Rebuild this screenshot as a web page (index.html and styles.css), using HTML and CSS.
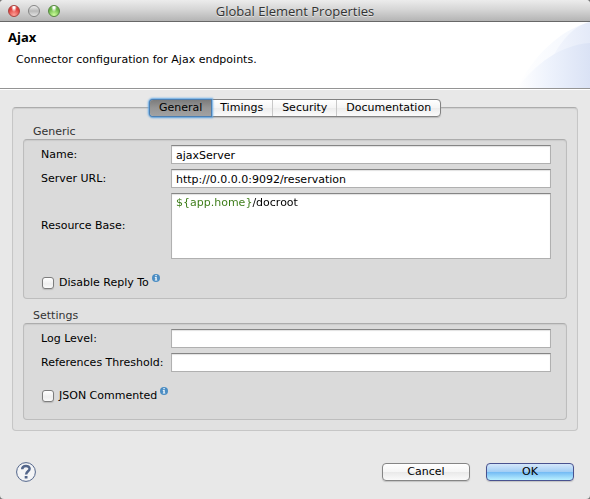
FILE: index.html
```html
<!DOCTYPE html>
<html lang="en">
<head>
<meta charset="utf-8">
<title>Global Element Properties</title>
<link rel="stylesheet" href="styles.css">
</head>
<body>
<main class="window">
  <header class="titlebar">
    <div class="lights">
      <button class="light red" type="button" aria-label="Close"></button>
      <button class="light gray" type="button" aria-label="Minimize"></button>
      <button class="light green" type="button" aria-label="Zoom"></button>
    </div>
    <h1 class="title">Global Element Properties</h1>
  </header>
  <section class="banner">
    <div class="banner-text">
      <h2 class="banner-title">Ajax</h2>
      <p class="banner-desc">Connector configuration for Ajax endpoints.</p>
    </div>
    <svg class="banner-art" viewBox="0 0 75 66" aria-hidden="true">
      <defs>
        <linearGradient id="far" x1="0" x2="1"><stop offset="0" stop-color="#fff"/><stop offset="1" stop-color="#f1f5fd"/></linearGradient>
        <linearGradient id="mid" x1="0" x2="1"><stop offset="0" stop-color="#f3f6fd"/><stop offset="1" stop-color="#e4eaf8"/></linearGradient>
        <linearGradient id="near" x1="0" x2="1"><stop offset="0" stop-color="#fff"/><stop offset=".45" stop-color="#edf2fc"/><stop offset="1" stop-color="#dae2f5"/></linearGradient>
      </defs>
      <path fill="url(#far)" d="M2 66C18 35 44 8 75 0V66Z"/>
      <path fill="url(#mid)" d="M37 36C47 18 58 4 75 0V66H37Z"/>
      <path fill="url(#near)" d="M2 66C20 43 44 23 75 21V66Z"/>
    </svg>
  </section>
  <form class="content">
    <section class="panel">
      <div class="tabs" role="tablist">
        <button class="tab active" type="button" role="tab" aria-selected="true">General</button>
        <button class="tab" type="button" role="tab" aria-selected="false">Timings</button>
        <button class="tab" type="button" role="tab" aria-selected="false">Security</button>
        <button class="tab" type="button" role="tab" aria-selected="false">Documentation</button>
      </div>
      <h3 class="group-title">Generic</h3>
      <div class="group">
        <label for="name">Name:</label>
        <input class="field" id="name" type="text" value="ajaxServer">
        <label for="url">Server URL:</label>
        <input class="field" id="url" type="text" value="http://0.0.0.0:9092/reservation">
        <label for="base">Resource Base:</label>
        <textarea class="field area" id="base" spellcheck="false">${app.home}/docroot</textarea>
        <div class="check">
          <input class="box" id="reply" type="checkbox">
          <label for="reply">Disable Reply To</label>
          <svg class="info" viewBox="0 0 8 8" aria-hidden="true"><circle cx="4" cy="4" r="4" fill="#4b8dc3"/><path fill="#fff" d="M3.4 1h1.3v1.2H3.4zM2.8 3h1.9v2.8h.6v.8H2.8v-.8h.6v-2h-.6z"/></svg>
        </div>
      </div>
      <h3 class="group-title">Settings</h3>
      <div class="group settings">
        <label for="log">Log Level:</label>
        <input class="field" id="log" type="text">
        <label for="refs">References Threshold:</label>
        <input class="field" id="refs" type="text">
        <div class="check">
          <input class="box" id="json" type="checkbox">
          <label for="json">JSON Commented</label>
          <svg class="info" viewBox="0 0 8 8" aria-hidden="true"><circle cx="4" cy="4" r="4" fill="#4b8dc3"/><path fill="#fff" d="M3.4 1h1.3v1.2H3.4zM2.8 3h1.9v2.8h.6v.8H2.8v-.8h.6v-2h-.6z"/></svg>
        </div>
      </div>
    </section>
    <footer class="footer">
      <button class="help" type="button" aria-label="Help">
        <svg class="help-icon" viewBox="0 0 20 20" aria-hidden="true"><circle cx="10" cy="10" r="9.4" fill="#f3f4f6" stroke="#52658a" stroke-width="1"/><path d="M6.2 7.2C6.3 2.8 13.6 3 13.6 6.8C13.6 9.2 10.1 9.4 10.1 12.5" fill="none" stroke="#52658a" stroke-width="2.5"/><path d="M8.7 14.1h2.8v2.5H8.7z" fill="#52658a"/></svg>
      </button>
      <button class="push" type="button">Cancel</button>
      <button class="push primary" type="submit">OK</button>
    </footer>
  </form>
</main>
</body>
</html>
```
FILE: styles.css
```css
* {
  box-sizing: border-box;
}

body {
  margin: 0;
  background: #777;
  color: #000;
  font: 11px/18px "DejaVu Sans", sans-serif;
}

button,
input,
textarea {
  font: inherit;
  color: inherit;
}

h1, h2, h3, p {
  margin: 0;
}

.window {
  display: flex;
  flex-direction: column;
  min-height: 100vh;
  overflow: hidden;
  border-radius: 4px;
  background: #e8e8e8;
}

.titlebar {
  display: grid;
  grid-template-columns: 1fr auto 1fr;
  align-items: center;
  height: 22px;
  padding: 0 8px;
  border-bottom: 1px solid #686868;
  background: linear-gradient(#ececec, #d6d6d6 45%, #b4b4b4);
}

.lights {
  display: flex;
  gap: 8px;
}

.light {
  width: 12px;
  height: 12px;
  padding: 0;
  border: 1px solid #777;
  border-radius: 50%;
}

.red {
  border-color: #a84440;
  background: radial-gradient(ellipse at 50% 10%, #fff 0 12%, transparent 40%), radial-gradient(circle at 50% 90%, #ffa39a, #dd3c39 65%);
}

.gray {
  border-color: #858585;
  background: linear-gradient(#eee, #b9b9b9 50%, #e4e4e4);
}

.green {
  border-color: #568740;
  background: radial-gradient(ellipse at 50% 10%, #fff 0 12%, transparent 40%), radial-gradient(circle at 50% 90%, #ceff9c, #68b446 65%);
}

.title {
  font-family: "Open Sans", sans-serif;
  font-size: 13px;
  font-weight: 400;
  color: #333;
  text-shadow: 0 1px 0 #e6e6e6;
}

.banner {
  display: flex;
  justify-content: space-between;
  height: 68px;
  border-bottom: 1px solid #fff;
  background: #fff;
  box-shadow: inset 0 -1px 0 #949494;
}

.banner-text {
  padding: 6px 8px;
}

.banner-title {
  font-family: "Open Sans", sans-serif;
  font-size: 13px;
  font-weight: 700;
}

.banner-desc {
  padding: 5px 8px;
}

.banner-art {
  width: 75px;
  height: 66px;
}

.content {
  display: flex;
  flex: 1;
  flex-direction: column;
  padding: 17px 12px;
}

.panel {
  padding: 0 10px 10px;
  border: 1px solid #c6c6c6;
  border-top-color: #acacac;
  border-radius: 4px;
  background: #e1e1e1;
  box-shadow: inset 0 1px 1px #cfcfcf;
}

.tabs {
  display: flex;
  width: max-content;
  height: 18px;
  margin: -9px auto 0;
  border: 1px solid #828282;
  border-radius: 4px;
  background: linear-gradient(#fff, #f4f4f4 50%, #ececec 51%, #fbfbfb);
  box-shadow: 0 1px 1px #bbb;
}

.tab {
  padding: 0 9px;
  border: 0;
  background: none;
  line-height: 16px;
}

.tab + .tab + .tab {
  border-left: 1px solid #c8c8c8;
}

.active {
  border-radius: 3px 0 0 3px;
  background: linear-gradient(#7c7c7c, #969696 50%, #a2a2a2);
  box-shadow: 0 0 0 1px #4c7fb2, 0 0 2px 2px #62a8e6;
}

.group-title {
  padding: 8px 10px 0;
  font-size: 11px;
  font-weight: 400;
  line-height: 14px;
  color: #333;
}

.group {
  display: grid;
  grid-template-columns: 130px 1fr;
  gap: 5px 0;
  align-items: center;
  padding: 5px 15px 5px 17px;
  border: 1px solid #bdbdbd;
  border-top-color: #acacac;
  border-radius: 4px;
  background: #dadada;
  box-shadow: inset 0 1px 1px #cacaca;
}

.group + .group-title {
  padding-top: 10px;
}

.settings {
  padding-bottom: 13px;
}

.field {
  width: 100%;
  height: 19px;
  padding: 1px 4px 0;
  border: 1px solid #b0b0b0;
  border-top-color: #858585;
  border-radius: 0;
  background: #fff;
  box-shadow: inset 0 1px 1px #e2e2e2;
  outline: 0;
}

/* The variable part of the first line is tinted through the glyphs. */
.area {
  display: block;
  height: 66px;
  resize: none;
  line-height: 16px;
  color: transparent;
  caret-color: #000;
  background:
    linear-gradient(to right, #397a14 80px, #000 80px) text,
    #fff;
}

.check {
  display: flex;
  grid-column: 1 / -1;
  align-items: center;
  height: 20px;
  margin-top: 9px;
}

.box {
  width: 12px;
  height: 12px;
  margin: 0 5px 0 1px;
  appearance: none;
  border: 1px solid #7d7d7d;
  border-radius: 3px;
  background: linear-gradient(#fff, #eee 60%, #fafafa);
  box-shadow: 0 1px 1px #bbb;
}

.box:checked {
  background: #5b9bd8;
}

.info {
  align-self: flex-start;
  width: 8px;
  height: 8px;
  margin: 1px 0 0 3px;
}

.footer {
  display: flex;
  gap: 16px;
  align-items: center;
  margin-top: auto;
  padding: 0 4px;
}

.help {
  width: 20px;
  height: 20px;
  margin-right: auto;
  padding: 0;
  border: 0;
  background: none;
}

.help-icon {
  display: block;
  width: 20px;
  height: 20px;
}

.push {
  width: 88px;
  height: 18px;
  padding: 0;
  border: 1px solid #858585;
  border-radius: 4px;
  background: linear-gradient(#fff, #f5f5f5 50%, #e9e9e9 51%, #fafafa);
  box-shadow: 0 1px 1px #c2c2c2;
  line-height: 16px;
}

.primary {
  border-color: #49528f;
  background: linear-gradient(#d5e7fa, #a1cdf5 50%, #73baf4 51%, #b9f0ff);
}
```
